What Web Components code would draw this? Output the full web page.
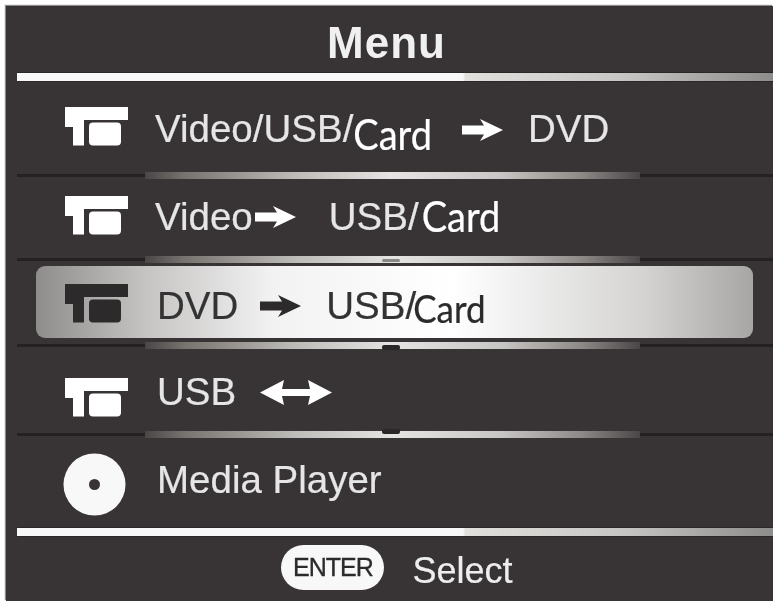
<!DOCTYPE html>
<html><head><meta charset="utf-8"><style>
html,body{margin:0;background:#fff;height:100%;overflow:hidden}
</style></head><body>
<menu-panel>
  <menu-title>Menu</menu-title>
  <menu-rule></menu-rule>
  <menu-row style="--h:89px;--it:0px;--tt:3px;--tx:0px" icon="tape">
    <span>Video/USB/</span><card-text size="38" left="0" drop="3">Card</card-text><flow-arrow gap="30" tail="25"></flow-arrow><span>DVD</span>
  </menu-row>
  <menu-divider></menu-divider>
  <menu-row style="--h:76px;--it:-2px;--tt:0px;--tx:0px" icon="tape">
    <span>Video</span><flow-arrow gap="2" tail="33"></flow-arrow><span>USB/</span><card-text size="38" left="3" drop="-2">Card</card-text>
  </menu-row>
  <menu-divider nub="low-grey"></menu-divider>
  <menu-row selected style="--h:78px;--it:1px;--tt:4px;--tx:2px" icon="tape">
    <span>DVD</span><flow-arrow gap="22" tail="25"></flow-arrow><span>USB/</span><card-text size="35" left="-3" drop="1">Card</card-text>
  </menu-row>
  <menu-divider nub="low"></menu-divider>
  <menu-row style="--h:81px;--it:8px;--tt:3px;--tx:2px" icon="tape">
    <span>USB</span><flow-arrow gap="24" both tail="0"></flow-arrow>
  </menu-row>
  <menu-divider nub="high"></menu-divider>
  <menu-row style="--h:89px;--it:2px;--tt:-2px;--tx:2px" icon="disc">
    <span>Media Player</span>
  </menu-row>
  <menu-rule></menu-rule>
  <menu-footer></menu-footer>
</menu-panel>
<script>
function def(name, css, html, init){
  customElements.define(name, class extends HTMLElement{
    constructor(){super();this.attachShadow({mode:'open'}).innerHTML='<style>'+css+'</style>'+(typeof html==='function'?html(this):html);}
    connectedCallback(){ if(init) init(this); }
  });
}
def('menu-panel',`:host{display:flex;flex-direction:column;box-sizing:border-box;width:767px;height:595px;margin:6px 0 0 6px;padding:0 0 0 11px;background:#383435;color:#eee;font-family:"Liberation Sans",Arial,sans-serif;overflow:hidden;box-shadow:-1px -1px 1px #8a8a8a;filter:blur(.45px)}`,`<slot></slot>`);
def('menu-title',`:host{display:flex;justify-content:center;align-items:center;height:66px;flex:none;font-size:44px;font-weight:700;letter-spacing:1px;color:#f0f0f0;padding:8px 17px 0 0;box-sizing:border-box}`,`<slot></slot>`);
def('menu-rule',`:host{display:block;height:10px;flex:none;background:linear-gradient(90deg,#f8f8f8 0,#f8f8f8 59%,#e2e0dd 59.3%,#c8c6c4 80%,#8f8d8b 100%);border-top:1px solid #2a2728;border-bottom:1px solid #2a2728;box-sizing:border-box}`,``);
def('menu-divider',`:host{display:flex;align-items:center;height:8px;flex:none;position:relative}
.d{height:3px;background:#242122}.l{width:128px}.r{flex:1}
.b{width:495px;height:7px;background:linear-gradient(90deg,#4a4647 0,#77736f 8%,#bdbbb8 30%,#e6e4e2 50%,#c8c6c4 72%,#8d8a88 88%,#4a4647 100%)}
.n{position:absolute;left:365px;width:18px;height:4px;border-radius:2px;background:#2a2728}
:host([nub="low"]) .n{bottom:-1px;height:5px}
:host([nub="high"]) .n{top:-1px;height:5px}
:host([nub="low-grey"]) .n{bottom:1px;height:3px;background:#8a8886}
:host(:not([nub])) .n{display:none}`,
`<div class="d l"></div><div class="b"></div><div class="d r"></div><div class="n"></div>`);
const tape=`<svg width="63" height="39" viewBox="0 0 63 39" fill="currentColor"><path d="M0 0H63V13H19V38.500H8V20H0Z"/><rect x="24" y="15.500" width="32" height="23" rx="4"/></svg>`;
const disc=`<svg width="63" height="63" viewBox="0 0 63 63" style="margin-left:-2px"><circle cx="31.500" cy="31.500" r="31" fill="#f8f8f8"/><circle cx="31.500" cy="31.500" r="5.500" fill="#383435"/></svg>`;
def('menu-row',`:host{display:block;flex:none;height:var(--h);font-size:38.5px;--fg:#e6e6e6;--hi:#fff}
:host([selected]){--fg:#333;--hi:#2c2a2a}
.wrap{box-sizing:border-box;height:100%;display:flex;align-items:center;padding-left:48px;color:var(--fg)}
:host([selected]) .wrap{width:717px;height:72px;margin:3px 0 0 19px;padding-left:29px;border-radius:9px;background:linear-gradient(90deg,#8f8d8c 0,#c5c3c2 15%,#f2f2f2 33%,#fff 58%,#d4d3d2 85%,#a8a6a5 100%)}
.ic{display:flex;width:calc(90px + var(--tx));flex:none;color:var(--hi);transform:translateY(var(--it))}
.txt{display:flex;align-items:center;white-space:nowrap;line-height:1;height:40px;transform:translateY(var(--tt));-webkit-text-stroke:.2px currentColor}
`,(el)=>`<div class="wrap"><div class="ic">${el.getAttribute('icon')==='disc'?disc:tape}</div><div class="txt"><slot></slot></div></div>`);
def('card-text',`:host{display:inline-block;font-family:Lato,"Noto Sans",sans-serif;color:var(--hi);font-size:var(--s,36px);line-height:1;margin-left:var(--l,0);transform:translateY(var(--d,0)) scaleY(1.12)}`,`<slot></slot>`,el=>{el.style.setProperty('--s',el.getAttribute('size')+'px');el.style.setProperty('--l',el.getAttribute('left')+'px');el.style.setProperty('--d',el.getAttribute('drop')+'px')});
def('flow-arrow',`:host{display:inline-flex;align-items:center;flex:none;color:var(--hi)}`,(el)=>{
  const g=+el.getAttribute('gap'),t=+el.getAttribute('tail');
  const svg=el.hasAttribute('both')
   ?`<svg width="72" height="25" viewBox="0 0 72 25" fill="currentColor"><path d="M0 12.500L24 0L22 9H50L48 0L72 12.500L48 25L50 16H22L24 25Z"/></svg>`
   :`<svg width="41" height="22" viewBox="0 0 41 22" fill="currentColor"><path d="M0 6.500H22L18 0L41 11L18 22L22 15.500H0Z"/></svg>`;
  return `<div style="display:flex;margin:0 ${t}px 0 ${g}px">${svg}</div>`;
});
def('menu-footer',`:host{display:flex;flex:1;align-items:center;justify-content:center;gap:28px;padding-left:4px;font-size:36px}
.pill{display:flex;align-items:center;justify-content:center;width:103px;height:45px;border-radius:23px;background:#f8f8f8;color:#2c2a2a;font-size:25px;letter-spacing:-1px;margin-top:-3px;-webkit-text-stroke:.3px #2c2a2a}
.sel{margin-top:4px;-webkit-text-stroke:.2px currentColor}`,
`<div class="pill">ENTER</div><div class="sel">Select</div>`);
</script>
</body></html>
